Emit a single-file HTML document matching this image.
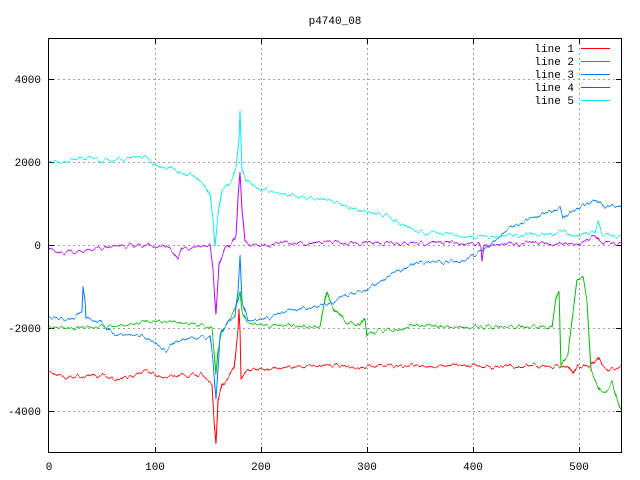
<!DOCTYPE html>
<html><head><meta charset="utf-8"><style>
html,body{margin:0;padding:0;background:#fff;}
svg{display:block;font-family:"Liberation Mono","DejaVu Sans Mono",monospace;font-size:11px;}
</style></head><body>
<svg width="640" height="480" viewBox="0 0 640 480" xmlns="http://www.w3.org/2000/svg">
<defs>
<filter id="nz" filterUnits="userSpaceOnUse" x="0" y="0" width="640" height="480">
<feTurbulence type="fractalNoise" baseFrequency="0.22 0.015" numOctaves="2" seed="3" result="t"/>
<feColorMatrix in="t" type="matrix" values="1 0 0 0 0  0 0 0 0 0.5  0 0 0 0 0.5  0 0 0 0 1" result="m"/>
<feDisplacementMap in="SourceGraphic" in2="m" scale="9" xChannelSelector="G" yChannelSelector="R"/>
</filter>
</defs>
<rect width="640" height="480" fill="#fff"/>
<g stroke="#a0a0a0" stroke-width="1" stroke-dasharray="2,3" shape-rendering="crispEdges">
<line x1="155.5" y1="38" x2="155.5" y2="453"/>
<line x1="261.5" y1="38" x2="261.5" y2="453"/>
<line x1="367.5" y1="38" x2="367.5" y2="453"/>
<line x1="473.5" y1="38" x2="473.5" y2="453"/>
<line x1="579.5" y1="38" x2="579.5" y2="453"/>
<line x1="48" y1="79.5" x2="622" y2="79.5"/>
<line x1="48" y1="162.5" x2="622" y2="162.5"/>
<line x1="48" y1="245.5" x2="622" y2="245.5"/>
<line x1="48" y1="328.5" x2="622" y2="328.5"/>
<line x1="48" y1="411.5" x2="622" y2="411.5"/>
</g>
<g stroke="#000" stroke-width="1" shape-rendering="crispEdges">
<line x1="48" y1="79.5" x2="54" y2="79.5"/><line x1="616" y1="79.5" x2="622" y2="79.5"/>
<line x1="48" y1="162.5" x2="54" y2="162.5"/><line x1="616" y1="162.5" x2="622" y2="162.5"/>
<line x1="48" y1="245.5" x2="54" y2="245.5"/><line x1="616" y1="245.5" x2="622" y2="245.5"/>
<line x1="48" y1="328.5" x2="54" y2="328.5"/><line x1="616" y1="328.5" x2="622" y2="328.5"/>
<line x1="48" y1="411.5" x2="54" y2="411.5"/><line x1="616" y1="411.5" x2="622" y2="411.5"/>
<line x1="155.5" y1="38" x2="155.5" y2="44"/><line x1="155.5" y1="447" x2="155.5" y2="453"/>
<line x1="261.5" y1="38" x2="261.5" y2="44"/><line x1="261.5" y1="447" x2="261.5" y2="453"/>
<line x1="367.5" y1="38" x2="367.5" y2="44"/><line x1="367.5" y1="447" x2="367.5" y2="453"/>
<line x1="473.5" y1="38" x2="473.5" y2="44"/><line x1="473.5" y1="447" x2="473.5" y2="453"/>
<line x1="579.5" y1="38" x2="579.5" y2="44"/><line x1="579.5" y1="447" x2="579.5" y2="453"/>
</g>
<g fill="none" stroke-width="1" filter="url(#nz)">
<polyline stroke="#ff0000" points="48,373 70,377 100,375 120,380 146,371 160,376 200,375 212,384 214,420 216,445 218,400 222,385 228,378 234,368 238,330 239,308 240,330 241,378 246,372 255,370 285,367 330,365 360,367 400,365 450,366 500,366 555,366 560,366 568,367 573,375 578,366 590,366 598,357 602,365 610,370 622,368"/>
<polyline stroke="#00c000" points="48,326 60,328 100,327 125,325 145,321 175,322 205,325 212,330 214,350 216,375 218,350 222,330 230,318 235,310 238,300 240,290 242,310 247,322 260,325 320,327 325,300 327,290 330,300 335,310 345,322 360,326 365,317 367,335 380,330 400,330 415,325 450,327 500,327 540,327 552,327 556,300 559,292 561,365 568,355 572,320 577,280 583,277 587,300 591,370 600,390 605,393 612,383 615,393 620,408 622,410"/>
<polyline stroke="#0080ff" points="48,316 65,320 78,315 82,312 83,287 85,300 86,318 100,322 115,335 138,335 150,340 166,350 175,342 190,338 210,337 213,360 216,400 218,370 220,335 228,320 235,318 238,290 240,255 242,300 248,320 260,320 285,312 310,308 325,305 335,300 350,295 365,290 375,285 390,275 405,268 420,262 440,262 460,262 480,252 495,240 510,228 525,222 540,215 560,207 563,218 570,212 580,207 597,200 605,208 612,205 622,208"/>
<polyline stroke="#c000ff" points="48,249 65,253 100,248 145,245 170,248 178,258 182,248 200,248 210,246 213,270 216,315 219,265 225,250 232,243 236,235 238,200 240,172 242,210 245,240 250,245 260,245 300,243 400,243 478,243 481,248 482,261 484,245 540,243 580,243 595,235 600,243 622,243"/>
<polyline stroke="#00eeee" points="48,160 60,162 90,158 100,160 145,157 155,165 175,170 195,177 205,185 210,195 213,220 215,245 218,215 222,190 232,180 236,168 239,140 240,112 242,170 246,180 260,190 280,193 300,197 330,200 350,208 385,215 400,223 420,232 450,235 470,236 500,236 540,235 565,230 570,235 595,232 598,222 602,235 622,236"/>
</g>
<rect x="48.5" y="38.5" width="573" height="414" fill="none" stroke="#000" stroke-width="1" shape-rendering="crispEdges"/>
<g fill="#000" text-anchor="end">
<text x="574" y="52">line 1</text>
<text x="574" y="65">line 2</text>
<text x="574" y="78">line 3</text>
<text x="574" y="91">line 4</text>
<text x="574" y="104">line 5</text>
<text x="41" y="83">4000</text>
<text x="41" y="166">2000</text>
<text x="41" y="249">0</text>
<text x="41" y="332">-2000</text>
<text x="41" y="415">-4000</text>
</g>
<g stroke-width="1" shape-rendering="crispEdges">
<line x1="581" y1="48.5" x2="610" y2="48.5" stroke="#ff0000"/>
<line x1="581" y1="61.5" x2="610" y2="61.5" stroke="#00c000"/>
<line x1="581" y1="74.5" x2="610" y2="74.5" stroke="#0080ff"/>
<line x1="581" y1="87.5" x2="610" y2="87.5" stroke="#c000ff"/>
<line x1="581" y1="100.5" x2="610" y2="100.5" stroke="#00eeee"/>
</g>
<g fill="#000" text-anchor="middle">
<text x="49" y="470">0</text>
<text x="155" y="470">100</text>
<text x="261" y="470">200</text>
<text x="367" y="470">300</text>
<text x="473" y="470">400</text>
<text x="579" y="470">500</text>
<text x="335" y="24">p4740_08</text>
</g>
</svg>
</body></html>
